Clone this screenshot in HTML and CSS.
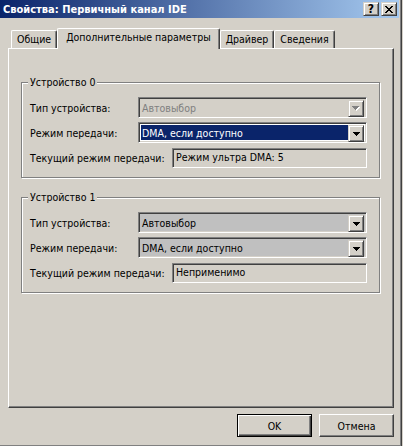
FILE: index.html
```html
<!DOCTYPE html>
<html lang="ru">
<head>
    <meta charset="UTF-8">
    <title>Свойства: Первичный канал IDE</title>
    <link rel="stylesheet" href="styles.css">
</head>
<body>
    <div class="window">
        <div class="titlebar">
            <span class="title">Свойства: Первичный канал IDE</span>
            <div class="caption-buttons">
                <div class="cap-btn help">?</div>
                <div class="cap-btn">
                    <svg width="8" height="7" viewBox="0 0 8 7" shape-rendering="crispEdges">
                        <path d="M0 0h2v1h1v1h2v-1h1v-1h2v1h-1v1h-1v1h-1v1h1v1h1v1h1v1h-2v-1h-1v-1h-2v1h-1v1h-2v-1h1v-1h1v-1h1v-1h-1v-1h-1v-1h-1z" fill="#000"/>
                    </svg>
                </div>
            </div>
        </div>

        <div class="tabs">
            <div class="tab">Общие</div>
            <div class="tab selected">Дополнительные параметры</div>
            <div class="tab">Драйвер</div>
            <div class="tab">Сведения</div>
        </div>

        <div class="panel">
            <div class="group">
                <div class="legend">Устройство 0</div>
                <div class="row">
                    <span>Тип устройства:</span>
                    <div class="combo disabled">
                        <div class="combo-value">Автовыбор</div>
                        <div class="drop-btn">
                            <svg width="8" height="5" viewBox="0 0 8 5" shape-rendering="crispEdges">
                                <path d="M1 1h7v1h-1v1h-1v1h-1v1h-1v-1h-1v-1h-1v-1h-1z" fill="#fff"/>
                                <path d="M0 0h7v1h-1v1h-1v1h-1v1h-1v-1h-1v-1h-1v-1h-1z" fill="#808080"/>
                            </svg>
                        </div>
                    </div>
                </div>
                <div class="row">
                    <span>Режим передачи:</span>
                    <div class="combo">
                        <div class="combo-value highlight">DMA, если доступно</div>
                        <div class="drop-btn">
                            <svg width="7" height="4" viewBox="0 0 7 4" shape-rendering="crispEdges">
                                <path d="M0 0h7v1h-1v1h-1v1h-1v1h-1v-1h-1v-1h-1v-1h-1z" fill="#000"/>
                            </svg>
                        </div>
                    </div>
                </div>
                <div class="row current">
                    <span>Текущий режим передачи:</span>
                    <div class="field">Режим ультра DMA: 5</div>
                </div>
            </div>

            <div class="group">
                <div class="legend">Устройство 1</div>
                <div class="row">
                    <span>Тип устройства:</span>
                    <div class="combo readonly">
                        <div class="combo-value">Автовыбор</div>
                        <div class="drop-btn">
                            <svg width="7" height="4" viewBox="0 0 7 4" shape-rendering="crispEdges">
                                <path d="M0 0h7v1h-1v1h-1v1h-1v1h-1v-1h-1v-1h-1v-1h-1z" fill="#000"/>
                            </svg>
                        </div>
                    </div>
                </div>
                <div class="row">
                    <span>Режим передачи:</span>
                    <div class="combo readonly">
                        <div class="combo-value">DMA, если доступно</div>
                        <div class="drop-btn">
                            <svg width="7" height="4" viewBox="0 0 7 4" shape-rendering="crispEdges">
                                <path d="M0 0h7v1h-1v1h-1v1h-1v1h-1v-1h-1v-1h-1v-1h-1z" fill="#000"/>
                            </svg>
                        </div>
                    </div>
                </div>
                <div class="row current">
                    <span>Текущий режим передачи:</span>
                    <div class="field">Неприменимо</div>
                </div>
            </div>
        </div>

        <div class="footer">
            <button class="btn default">OK</button>
            <button class="btn">Отмена</button>
        </div>
    </div>
</body>
</html>
```

FILE: styles.css
```css
* {
    margin: 0;
    padding: 0;
    box-sizing: border-box;
}

body {
    background: #d4d0c8;
    font-family: "DejaVu Sans Condensed", "Liberation Sans", sans-serif;
    font-size: 10.5px;
    color: #000;
}

.window {
    width: 402px;
    height: 446px;
    display: flex;
    flex-direction: column;
    border-right: 1px solid #404040;
    box-shadow: inset -1px -1px #808080;
}

/* title bar */
.titlebar {
    height: 18px;
    margin-right: 2px;
    padding: 0 2px 0 3px;
    display: flex;
    align-items: center;
    justify-content: space-between;
    background: linear-gradient(to right, #0a246a, #a6caf0);
}

.title {
    color: #fff;
    font-size: 11px;
    font-weight: bold;
}

.caption-buttons {
    display: flex;
    gap: 2px;
}

.cap-btn {
    width: 16px;
    height: 14px;
    display: flex;
    align-items: center;
    justify-content: center;
    background: #d4d0c8;
    border: 1px solid;
    border-color: #d4d0c8 #404040 #404040 #d4d0c8;
    box-shadow: inset 1px 1px #fff, inset -1px -1px #808080;
}

.cap-btn.help {
    font-weight: bold;
    font-size: 12px;
    line-height: 12px;
}

/* tabs */
.tabs {
    height: 30px;
    padding-left: 11px;
    display: flex;
    align-items: flex-end;
}

.tab {
    height: 18px;
    padding: 0 5px;
    line-height: 17px;
    border-top: 1px solid #fff;
    border-left: 1px solid #fff;
    border-right: 1px solid #404040;
    border-radius: 2px 2px 0 0;
    box-shadow: inset -1px 0 #808080;
}

.tab.selected {
    height: 21px;
    padding: 0 8px;
    line-height: 17px;
    margin-bottom: -1px;
    position: relative;
    z-index: 1;
    background: #d4d0c8;
}

/* page */
.panel {
    margin-left: 8px;
    width: 386px;
    height: 360px;
    padding: 33px 13px 0 12px;
    border: 1px solid;
    border-color: #fff #404040 #404040 #fff;
    box-shadow: inset -1px -1px #808080;
}

.group {
    position: relative;
    height: 96px;
    padding: 14px 12px 9px 8px;
    border: 1px solid #808080;
    box-shadow: inset 1px 1px #fff, 1px 1px #fff;
}

.group + .group {
    margin-top: 19px;
}

.legend {
    position: absolute;
    top: -7px;
    left: 6px;
    padding: 0 2px;
    line-height: 13px;
    background: #d4d0c8;
}

.row {
    display: flex;
    align-items: center;
    justify-content: space-between;
}

.row + .row {
    margin-top: 4px;
}

.row.current {
    margin-top: 5px;
}

.combo {
    width: 229px;
    height: 21px;
    padding: 2px;
    display: flex;
    background: #fff;
    border: 1px solid;
    border-color: #808080 #fff #fff #808080;
    box-shadow: inset 1px 1px #404040, inset -1px -1px #d4d0c8;
}

.combo.disabled {
    background: #d4d0c8;
    color: #808080;
}

.combo.readonly {
    background: #c0c0c0;
}

.combo-value {
    flex: 1;
    padding-left: 1px;
    line-height: 17px;
    white-space: nowrap;
}

.combo-value.highlight {
    background: #0a246a;
    color: #fff;
}

.drop-btn {
    width: 16px;
    height: 17px;
    display: flex;
    align-items: center;
    justify-content: center;
    background: #d4d0c8;
    border: 1px solid;
    border-color: #d4d0c8 #404040 #404040 #d4d0c8;
    box-shadow: inset 1px 1px #fff, inset -1px -1px #808080;
}

.field {
    width: 195px;
    height: 20px;
    padding: 0 3px;
    line-height: 16px;
    background: #d4d0c8;
    border: 1px solid;
    border-color: #808080 #fff #fff #808080;
    box-shadow: inset 1px 1px #404040, inset -1px -1px #d4d0c8;
}

/* buttons */
.footer {
    padding: 6px 7px 0 0;
    display: flex;
    justify-content: flex-end;
    gap: 7px;
}

.btn {
    width: 75px;
    height: 23px;
    font: inherit;
    color: #000;
    background: #d4d0c8;
    border: 1px solid;
    border-color: #fff #404040 #404040 #fff;
    box-shadow: inset -1px -1px #808080;
}

.btn.default {
    border: 1px solid #000;
    box-shadow: inset 1px 1px #fff, inset -1px -1px #404040, inset -2px -2px #808080;
}
```
